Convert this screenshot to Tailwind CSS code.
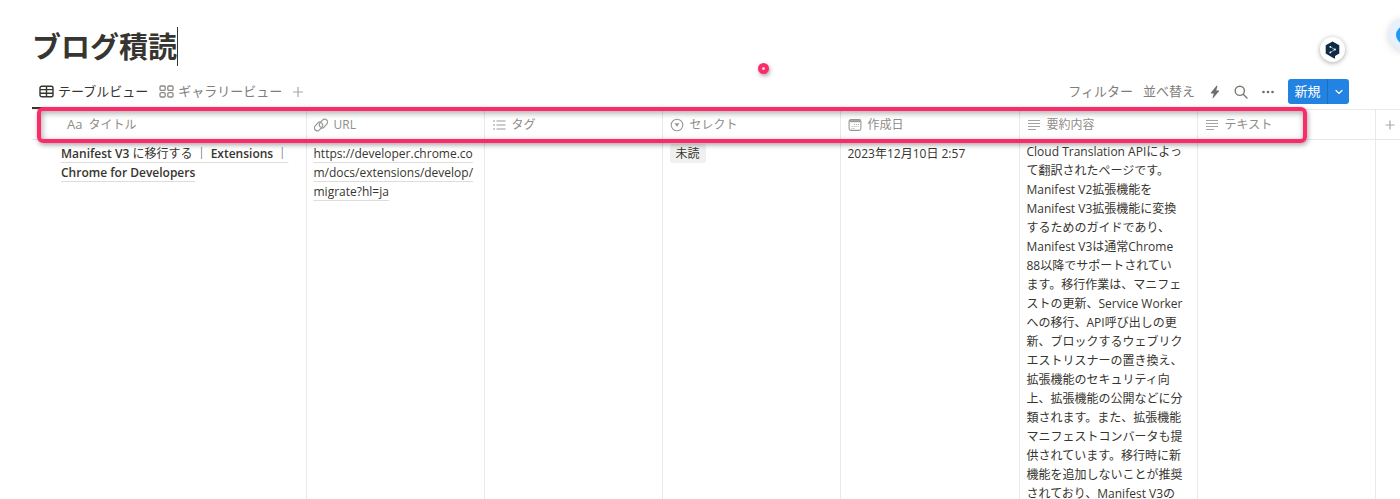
<!DOCTYPE html>
<html lang="ja">

<head>
  <meta charset="UTF-8" />
  <meta name="viewport" content="width=device-width, initial-scale=1.0" />
  <title>ブログ積読</title>
  <script src="https://cdn.jsdelivr.net/npm/@tailwindcss/browser@4"></script>
</head>

<body class="relative h-screen overflow-hidden bg-white text-[#37352f] text-[12px] leading-[19px] font-['Open_Sans','Noto_Sans_CJK_JP',sans-serif]">

  <!-- PAGE TITLE -->
  <header class="flex pl-8 pt-[27px]">
    <h1 class="text-[29px] leading-[39px] font-bold border-r border-[#37352f]">ブログ積読</h1>
  </header>

  <!-- VIEW TABS + TOOLBAR -->
  <div class="flex items-start justify-between pl-8 pr-[51px] pt-[13px] h-[43px]">
    <nav class="flex h-full text-[13px] leading-[25px]">
      <a href="#table" class="flex items-center h-full gap-1 pl-[7px] pr-1 pb-[3px] border-b-2 border-[#37352f]">
        <svg class="w-[15px] h-[13px]" viewBox="0 0 15 13" fill="none" stroke="#37352f" stroke-width="1.4">
          <rect x="1" y="1.2" width="13" height="10.6" rx="1.8" />
          <path d="M1 4.6h13M1 8.2h13M7.5 1.2v10.6" />
        </svg>
        テーブルビュー
      </a>
      <a href="#gallery" class="flex items-center h-full gap-1 pl-[7px] pb-[5px] text-[#807e79]">
        <svg class="w-[15px] h-[13px]" viewBox="0 0 15 13" fill="none" stroke="#8a8883" stroke-width="1.3">
          <rect x="1" y="1" width="5.2" height="4.4" rx="1.2" />
          <rect x="8.8" y="1" width="5.2" height="4.4" rx="1.2" />
          <rect x="1" y="7.6" width="5.2" height="4.4" rx="1.2" />
          <rect x="8.8" y="7.6" width="5.2" height="4.4" rx="1.2" />
        </svg>
        ギャラリービュー
      </a>
      <button type="button" aria-label="ビューを追加" class="flex items-center ml-[10px] h-[25px]">
        <svg class="w-3 h-3" viewBox="0 0 12 12" stroke="#aaa8a4" stroke-width="1.2"><path d="M6 1v10M1 6h10" /></svg>
      </button>
    </nav>

    <div class="flex items-center h-[25px] text-[13px] text-[#807e79]">
      <button type="button">フィルター</button>
      <button type="button" class="ml-[10px]">並べ替え</button>
      <button type="button" aria-label="オートメーション" class="ml-[14px]">
        <svg class="w-3 h-[14px]" viewBox="0 0 12 14" fill="#6f6d68"><path d="M7.6.8 1.8 7.8c-.2.3 0 .6.3.6h2.7L3.6 12.7c-.1.5.4.7.7.4L10.2 6c.2-.3 0-.6-.3-.6H7.2L8.4 1.2C8.5.7 7.9.4 7.6.8z" /></svg>
      </button>
      <button type="button" aria-label="検索" class="ml-[13px]">
        <svg class="w-[14px] h-[14px]" viewBox="0 0 14 14" fill="none" stroke="#7a7873" stroke-width="1.4" stroke-linecap="round"><circle cx="5.8" cy="5.8" r="4.6" /><path d="m9.2 9.2 3.8 3.8" /></svg>
      </button>
      <button type="button" aria-label="その他" class="ml-[14px]">
        <svg class="w-3 h-3" viewBox="0 0 12 12" fill="#6f6d68"><circle cx="1.5" cy="6" r="1.3" /><circle cx="6" cy="6" r="1.3" /><circle cx="10.5" cy="6" r="1.3" /></svg>
      </button>
      <div class="flex h-[25px] ml-[14px] rounded-[3px] overflow-hidden bg-[#2383e2] text-white">
        <button type="button" class="w-10 border-r border-[#1c70c4]">新規</button>
        <button type="button" aria-label="テンプレート" class="w-[21px] flex items-center justify-center">
          <svg class="w-2 h-2" viewBox="0 0 8 8" fill="none" stroke="white" stroke-width="1.2" stroke-linecap="round"><path d="m1 2.5 3 3 3-3" /></svg>
        </button>
      </div>
    </div>
  </div>

  <!-- DATABASE TABLE -->
  <main class="relative pl-8">
    <table class="w-full table-fixed border-collapse">
      <colgroup>
        <col class="w-[274px]" />
        <col class="w-[178px]" />
        <col class="w-[178px]" />
        <col class="w-[178px]" />
        <col class="w-[179px]" />
        <col class="w-[178px]" />
        <col class="w-[178px]" />
        <col />
      </colgroup>
      <thead class="text-left text-[#8f8d89]">
        <tr class="h-[30px] border-y border-[#e9e9e7]">
          <th class="font-normal border-r border-[#e9e9e7] pl-[35px]">
            <span class="flex items-center gap-[6px]"><span class="text-[13px]">Aa</span>タイトル</span>
          </th>
          <th class="font-normal border-r border-[#e9e9e7] pl-[7px]">
            <span class="flex items-center gap-[6px]">
              <svg class="w-[14px] h-[14px]" viewBox="0 0 14 14" fill="none" stroke="#9b9995" stroke-width="1.2" stroke-linecap="round">
                <path d="M6.2 8.8a2.8 2.8 0 0 1-.3-3.7l2.6-3a2.9 2.9 0 0 1 4.2 4l-2.6 3a2.8 2.8 0 0 1-3 .8" />
                <path d="M7.8 5.2a2.8 2.8 0 0 1 .3 3.7l-2.6 3a2.9 2.9 0 0 1-4.2-4l2.6-3a2.8 2.8 0 0 1 3-.8" />
              </svg>
              URL
            </span>
          </th>
          <th class="font-normal border-r border-[#e9e9e7] pl-[7px]">
            <span class="flex items-center gap-[6px]">
              <svg class="w-[14px] h-[14px]" viewBox="0 0 14 14" fill="none" stroke="#9b9995" stroke-width="1.1"><path d="M1 3h2M1 7h2M1 11h2M4.5 3h9M4.5 7h9M4.5 11h9" /></svg>
              タグ
            </span>
          </th>
          <th class="font-normal border-r border-[#e9e9e7] pl-[7px]">
            <span class="flex items-center gap-[6px]">
              <svg class="w-[14px] h-[14px]" viewBox="0 0 14 14"><circle cx="7" cy="7" r="5.8" fill="none" stroke="#9b9995" stroke-width="1.1" /><path d="M4.6 5.3h4.8L7 9z" fill="#9b9995" /></svg>
              セレクト
            </span>
          </th>
          <th class="font-normal border-r border-[#e9e9e7] pl-[7px]">
            <span class="flex items-center gap-[6px]">
              <svg class="w-[14px] h-[14px]" viewBox="0 0 14 14" fill="none" stroke="#9b9995">
                <rect x="1.1" y="1.6" width="11.8" height="10.8" rx="1.8" stroke-width="1.1" />
                <path d="M1.5 3.2h11" stroke-width="2" />
                <path d="M6 6.5h5M3.5 8.5h7M3.5 10.5h4" stroke-dasharray="1 1" stroke-width=".8" />
              </svg>
              作成日
            </span>
          </th>
          <th class="font-normal border-r border-[#e9e9e7] pl-[7px]">
            <span class="flex items-center gap-[6px]">
              <svg class="w-[14px] h-[14px]" viewBox="0 0 14 14" stroke="#a5a3a0"><path d="M1 2.5h12M1 5.5h12M1 8.5h12M1 11.5h8" /></svg>
              要約内容
            </span>
          </th>
          <th class="font-normal border-r border-[#e9e9e7] pl-[7px]">
            <span class="flex items-center gap-[6px]">
              <svg class="w-[14px] h-[14px]" viewBox="0 0 14 14" stroke="#a5a3a0"><path d="M1 2.5h12M1 5.5h12M1 8.5h12M1 11.5h8" /></svg>
              テキスト
            </span>
          </th>
          <th class="pl-[9px]">
            <button type="button" aria-label="列を追加" class="flex">
              <svg class="w-[10px] h-[10px]" viewBox="0 0 10 10" stroke="#aaa8a4" stroke-width="1.2"><path d="M5 .5v9M.5 5h9" /></svg>
            </button>
          </th>
        </tr>
      </thead>
      <tbody class="align-top">
        <tr>
          <td class="border-r border-[#e9e9e7] pl-[29px] pt-1 whitespace-nowrap">
            <a href="#page" class="font-semibold underline decoration-[#dddddb] underline-offset-4">Manifest V3 <span class="font-normal">に移行する ｜</span> Extensions <span class="font-normal">｜</span><br />Chrome for Developers</a>
          </td>
          <td class="border-r border-[#e9e9e7] pl-[7px] pt-1 whitespace-nowrap">
            <a href="#url" class="underline decoration-[#dddddb] underline-offset-4">https://developer.chrome.co<br />m/docs/extensions/develop/<br />migrate?hl=ja</a>
          </td>
          <td class="border-r border-[#e9e9e7]"></td>
          <td class="border-r border-[#e9e9e7] pl-[7px] pt-1">
            <span class="inline-block px-[6px] rounded-[3px] bg-[#f0f0ee]">未読</span>
          </td>
          <td class="border-r border-[#e9e9e7] pl-[7px] pt-1">2023年12月10日 2:57</td>
          <td class="border-r border-[#e9e9e7] pl-[7px] pt-[2px] whitespace-nowrap">
            Cloud Translation APIによっ<br />
            て翻訳されたページです。<br />
            Manifest V2拡張機能を<br />
            Manifest V3拡張機能に変換<br />
            するためのガイドであり、<br />
            Manifest V3は通常Chrome<br />
            88以降でサポートされてい<br />
            ます。移行作業は、マニフェ<br />
            ストの更新、Service Worker<br />
            への移行、API呼び出しの更<br />
            新、ブロックするウェブリク<br />
            エストリスナーの置き換え、<br />
            拡張機能のセキュリティ向<br />
            上、拡張機能の公開などに分<br />
            類されます。また、拡張機能<br />
            マニフェストコンバータも提<br />
            供されています。移行時に新<br />
            機能を追加しないことが推奨<br />
            されており、Manifest V3の
          </td>
          <td class="border-r border-[#e9e9e7]"></td>
          <td></td>
        </tr>
      </tbody>
    </table>

    <!-- highlight around the property names -->
    <div class="absolute -top-[2px] left-[37px] right-[93px] h-9 rounded-[6px] border-4 border-[#fb2b69] shadow-[1px_2px_5px_rgba(0,0,0,0.35),inset_1px_2px_6px_rgba(0,0,0,0.35)] pointer-events-none"></div>
  </main>

  <!-- click marker -->
  <div class="absolute top-[63px] left-[758px] w-[11px] h-[11px] rounded-full border-4 border-[#fb2b69] bg-[#e8d5db] shadow-[1px_2px_4px_rgba(0,0,0,0.35)]"></div>

  <!-- DeepL button -->
  <button type="button" aria-label="DeepL" class="absolute top-[37px] right-[55px] w-[25px] h-[25px] flex items-center justify-center rounded-full bg-white shadow-[0_1px_5px_rgba(0,0,0,0.35)]">
    <svg class="w-[15px] h-[18px]" viewBox="0 0 15 18">
      <path d="M7.5.5 14.3 4.3v8.2L10 15v2.8L6.5 16 .7 12.5V4.3z" fill="#0f2b46" />
      <path d="M5.3 5.8 9.8 8.6 5.3 11.4" fill="none" stroke="white" stroke-width=".6" />
      <circle cx="5.3" cy="5.8" r=".9" fill="white" /><circle cx="9.9" cy="8.6" r="1" fill="white" /><circle cx="5.3" cy="11.4" r=".9" fill="white" />
    </svg>
  </button>

  <!-- side badge, half off screen -->
  <div class="absolute top-[19px] -right-5 w-[31px] h-[31px] flex items-center justify-center rounded-full bg-[#e6f0fe] shadow-[0_1px_8px_rgba(0,0,0,0.18)]">
    <span class="w-[18px] h-[18px] rounded-full bg-[#1d9bf0]"></span>
  </div>
</body>

</html>
